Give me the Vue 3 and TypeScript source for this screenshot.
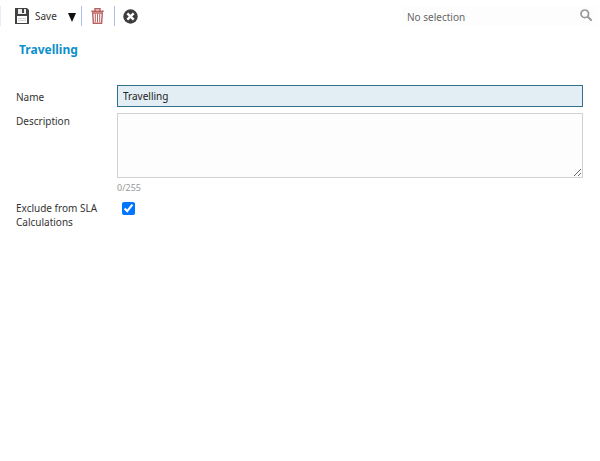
<script setup lang="ts">
import { ref } from 'vue'

const MAX_LENGTH = 255
const name = ref<string>('Travelling')
const description = ref<string>('')
const search = ref<string>('')
const excluded = ref<boolean>(true)
</script>

<template>
  <div class="page">
    <header class="toolbar">
      <div class="actions">
        <button type="button" class="save">
          <svg width="14" height="16" viewBox="0 0 14 16" aria-hidden="true">
            <path fill="#424242" d="M0 0h12l2 2v14H0z" />
            <path fill="#ececec" d="M3 1h4v4h2V1h2v5H3z" />
            <path fill="#fff" d="M2 8h10v7H2z" />
            <path stroke="#d0d0d0" d="M3 10.5h8M3 12.5h8" />
          </svg>
          <span>Save</span>
        </button>
        <button type="button" class="more" aria-label="More save options">
          <svg width="8" height="9" viewBox="0 0 8 9" aria-hidden="true">
            <path fill="#111" d="M0 0h8L4 9z" />
          </svg>
        </button>
        <button type="button" class="icon divided" aria-label="Delete">
          <svg width="13" height="16" viewBox="0 0 13 16" fill="none" stroke="#b9605e" aria-hidden="true">
            <path stroke-width="1.4" d="M4 2.5V.8h5v1.7M.3 3.2h12.4M1.7 5l.7 10.2h8.2L11.3 5z" />
            <path d="M4.3 6v8M6.5 6v8M8.7 6v8" />
          </svg>
        </button>
        <button type="button" class="icon divided" aria-label="Close">
          <svg width="15" height="15" viewBox="0 0 15 15" aria-hidden="true">
            <circle cx="7.5" cy="7.5" r="7.2" fill="#3d3d3d" />
            <path stroke="#fff" stroke-width="2.4" d="M4.3 4.3l6.4 6.4M10.7 4.3l-6.4 6.4" />
          </svg>
        </button>
      </div>
      <div class="search">
        <input v-model="search" type="text" placeholder="No selection" aria-label="Selection" />
        <button type="button" aria-label="Search">
          <svg width="12" height="12" viewBox="0 0 12 12" fill="none" stroke="#989898" aria-hidden="true">
            <circle cx="4.8" cy="4.8" r="3.8" stroke-width="1.7" />
            <path stroke-width="2" stroke-linecap="round" d="M8 8l3 3" />
          </svg>
        </button>
      </div>
    </header>

    <h1>Travelling</h1>

    <form @submit.prevent>
      <label for="name">Name</label>
      <input id="name" v-model="name" class="name" type="text" />

      <label for="description">Description</label>
      <div class="field">
        <textarea id="description" v-model="description" :maxlength="MAX_LENGTH"></textarea>
        <span class="count">{{ description.length }}/{{ MAX_LENGTH }}</span>
      </div>

      <label for="exclude">Exclude from SLA Calculations</label>
      <input id="exclude" v-model="excluded" class="check" type="checkbox" />
    </form>
  </div>
</template>

<style>
body {
  margin: 0;
  background: #fff;
}
</style>

<style scoped>
.page {
  font-family: "Noto Sans", "Open Sans", sans-serif;
  font-size: 10px;
  line-height: 14px;
  color: #333;
}
.page * {
  box-sizing: border-box;
}
button {
  display: flex;
  align-items: center;
  padding: 0;
  border: 0;
  background: none;
  font: inherit;
  color: inherit;
}
.toolbar {
  display: flex;
  justify-content: space-between;
  padding: 6px 4px 6px 0;
}
.actions {
  display: flex;
  height: 20px;
  border-left: 1px solid #e6edf8;
}
.save {
  gap: 6px;
  padding-left: 14px;
}
.more {
  padding: 3px 5px 0 11px;
}
.icon {
  width: 33px;
  justify-content: center;
}
.divided {
  border-left: 1px solid #a9c1ea;
}
.search {
  display: flex;
  width: 194px;
  height: 20px;
  background: #fdfdfd;
}
.search input {
  flex: 1;
  min-width: 0;
  padding: 2px 5px 0;
  border: 0;
  outline: 0;
  background: none;
  font: inherit;
  color: inherit;
}
.search input::placeholder {
  color: #666;
  opacity: 1;
}
.search button {
  padding: 0 4px 2px;
}
h1 {
  margin: 9px 19px 26px;
  font-size: 12px;
  line-height: 18px;
  font-weight: 700;
  color: #0c8fcc;
}
form {
  display: grid;
  grid-template-columns: 85px 1fr;
  column-gap: 16px;
  row-gap: 6px;
  padding: 0 17px 0 16px;
  align-items: start;
}
label {
  padding-top: 1px;
}
label[for="name"] {
  align-self: center;
}
label[for="exclude"] {
  padding-top: 0;
}
.name {
  width: 100%;
  height: 22px;
  padding: 0 5px;
  border: 1px solid #35718a;
  border-radius: 0;
  outline: 0;
  background: #e2eef4;
  font: inherit;
  color: #222;
}
.field {
  display: flex;
  flex-direction: column;
}
textarea {
  width: 100%;
  height: 65px;
  padding: 4px 5px;
  border: 1px solid #d2d2d2;
  border-radius: 0;
  outline: 0;
  background: #fdfdfd;
  font: inherit;
  color: inherit;
}
.count {
  padding-top: 3px;
  font-size: 9px;
  color: #999;
}
.check {
  width: 13px;
  height: 13px;
  margin: 1px 5px;
  accent-color: #0075ff;
}
</style>
